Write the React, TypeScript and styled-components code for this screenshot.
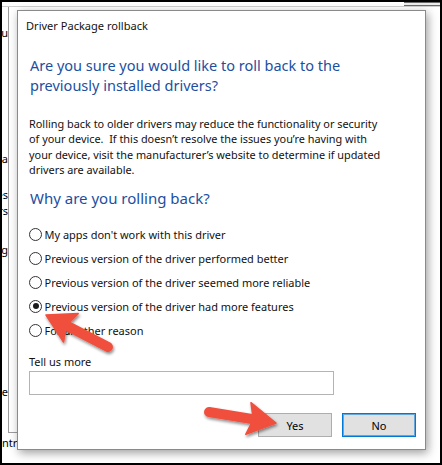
import React from "react";
import styled, { createGlobalStyle } from "styled-components";

const GlobalStyle = createGlobalStyle`
  html, body { margin: 0; padding: 0; background: #fff; }
  body { font-family: "Noto Sans", "Open Sans", sans-serif; color: #000; }
`;

const Frame = styled.div`
  position: relative;
  width: 442px;
  height: 465px;
  box-sizing: border-box;
  border: 2px solid #000;
  background: #fff;
  overflow: hidden;
`;

/* ---- window behind the dialog ---- */
const Backdrop = styled.div`
  display: flex;
  flex-direction: column;
  height: 100%;
`;

const TopEdge = styled.div`
  display: flex;
  justify-content: flex-end;
  height: 4px;
  flex-shrink: 0;
  border-bottom: 1px solid #cfcfcf;
`;

const TopEdgeDark = styled.div`
  width: 36px;
  border-top: 1px solid #6a6a6a;
  border-bottom: 1px solid #6a6a6a;
  background: #ececec;
`;

const Middle = styled.div`
  display: flex;
  height: 426px;
  flex-shrink: 0;
`;

const FragColumn = styled.div`
  width: 6px;
  display: flex;
  flex-direction: column;
  align-items: flex-end;
`;

const Frag = styled.div<{ $gap: number }>`
  margin-top: ${(p) => p.$gap}px;
  height: 12px;
  line-height: 12px;
  font-size: 11px;
  white-space: nowrap;
`;

const PaneEdge = styled.div`
  width: 10px;
  border-left: 1px solid #9c9c9c;
  border-bottom: 1px solid #9c9c9c;
`;

const BottomLabel = styled.div`
  margin-top: 4px;
  font-size: 11px;
  line-height: 12px;
  white-space: nowrap;
`;

/* ---- dialog ---- */
const Dialog = styled.div`
  position: absolute;
  left: 15px;
  top: 8px;
  width: 409px;
  height: 440px;
  box-sizing: border-box;
  border: 1px solid #8a8a8a;
  background: #fff;
  box-shadow: 2px 3px 9px rgba(0, 0, 0, 0.38);
  display: flex;
  flex-direction: column;
`;

const Title = styled.div`
  margin-top: 7px;
  padding-left: 8px;
  font-size: 11.05px;
  line-height: 16px;
  color: #111;
`;

const Body = styled.div`
  padding: 0 9px 0 11px;
  display: flex;
  flex-direction: column;
`;

const Heading = styled.div<{ $top: number; $size: number }>`
  margin-top: ${(p) => p.$top}px;
  margin-left: 1px;
  font-size: ${(p) => p.$size}px;
  line-height: 20px;
  color: #1c4f9f;
`;

const Para = styled.div`
  margin-top: 20.5px;
  font-size: 10.88px;
  line-height: 15.4px;
  color: #111;
`;

const RadioList = styled.div`
  margin-top: 14px;
  display: flex;
  flex-direction: column;
`;

const RadioRow = styled.label`
  display: flex;
  align-items: center;
  height: 24px;
  gap: 2.5px;
  font-size: 10.98px;
  color: #111;
`;

const RadioCircle = styled.span<{ $on?: boolean }>`
  width: 13px;
  height: 13px;
  box-sizing: border-box;
  border-radius: 50%;
  border: 1px solid #333;
  background: #fff;
  display: flex;
  align-items: center;
  justify-content: center;
  flex-shrink: 0;
  &::after {
    content: "";
    width: 6px;
    height: 6px;
    border-radius: 50%;
    background: ${(p) => (p.$on ? "#1a1a1a" : "transparent")};
  }
`;

const FieldLabel = styled.div`
  margin-top: 11.4px;
  font-size: 10.98px;
  line-height: 15px;
  color: #111;
`;

const TextBox = styled.div`
  margin-top: 2.6px;
  width: 305px;
  height: 24px;
  box-sizing: border-box;
  border: 1px solid #b4b4b4;
  background: #fff;
`;

const ButtonRow = styled.div`
  margin-top: 18px;
  display: flex;
  justify-content: flex-end;
  gap: 10px;
`;

const Button = styled.div<{ $primary?: boolean }>`
  width: 74px;
  height: 24px;
  box-sizing: border-box;
  display: flex;
  align-items: center;
  justify-content: center;
  font-size: 10.98px;
  color: #000;
  background: #e1e1e1;
  border: 1px solid ${(p) => (p.$primary ? "#0078d7" : "#adadad")};
  box-shadow: ${(p) => (p.$primary ? "inset 0 0 0 1px rgba(0,120,215,0.55)" : "none")};
`;

/* ---- callout arrows ---- */
const Overlay = styled.svg`
  position: absolute;
  left: -2px;
  top: -2px;
  width: 442px;
  height: 465px;
  pointer-events: none;
`;

type ArrowProps = { x1: number; y1: number; x2: number; y2: number };

function Arrow({ x1, y1, x2, y2 }: ArrowProps) {
  const len = Math.hypot(x2 - x1, y2 - y1);
  const dx = (x2 - x1) / len;
  const dy = (y2 - y1) / len;
  const px = -dy;
  const py = dx;
  const headLen = 28;
  const half = 16;
  const bx = x2 - dx * headLen;
  const by = y2 - dy * headLen;
  const nx = bx + dx * 5;
  const ny = by + dy * 5;
  const head = [
    `${x2},${y2}`,
    `${bx + px * half},${by + py * half}`,
    `${nx},${ny}`,
    `${bx - px * half},${by - py * half}`,
  ].join(" ");
  return (
    <g filter="url(#arrowShadow)">
      <line x1={x1} y1={y1} x2={nx} y2={ny} stroke="#f0503e" strokeWidth={10} strokeLinecap="round" />
      <polygon points={head} fill="#f0503e" strokeLinejoin="round" stroke="#f0503e" strokeWidth={1.5} />
    </g>
  );
}

const reasons = [
  "My apps don't work with this driver",
  "Previous version of the driver performed better",
  "Previous version of the driver seemed more reliable",
  "Previous version of the driver had more features",
  "For another reason",
];

export default function App() {
  return (
    <>
      <GlobalStyle />
      <Frame>
        <Backdrop>
          <TopEdge>
            <TopEdgeDark />
          </TopEdge>
          <Middle>
            <FragColumn>
              <Frag $gap={19.7}>u</Frag>
              <Frag $gap={114}>a</Frag>
              <Frag $gap={24}>es</Frag>
              <Frag $gap={4.5}>rs</Frag>
              <Frag $gap={27}>ng</Frag>
              <Frag $gap={130}>e</Frag>
            </FragColumn>
            <PaneEdge />
          </Middle>
          <BottomLabel>ntrol</BottomLabel>
        </Backdrop>

        <Dialog>
          <Title>Driver Package rollback</Title>
          <Body>
            <Heading $top={21.3} $size={14.5}>
              Are you sure you would like to roll back to the
              <br />
              previously installed drivers?
            </Heading>
            <Para>
              Rolling back to older drivers may reduce the functionality or security
              <br />
              of your device.&nbsp; If this doesn’t resolve the issues you’re having with
              <br />
              your device, visit the manufacturer’s website to determine if updated
              <br />
              drivers are available.
            </Para>
            <Heading $top={10.9} $size={15}>Why are you rolling back?</Heading>
            <RadioList>
              {reasons.map((r, i) => (
                <RadioRow key={r}>
                  <RadioCircle $on={i === 3} />
                  {r}
                </RadioRow>
              ))}
            </RadioList>
            <FieldLabel>Tell us more</FieldLabel>
            <TextBox />
            <ButtonRow>
              <Button>Yes</Button>
              <Button $primary>No</Button>
            </ButtonRow>
          </Body>
        </Dialog>

        <Overlay viewBox="0 0 442 465">
          <defs>
            <filter id="arrowShadow" x="-20%" y="-40%" width="140%" height="180%">
              <feDropShadow dx="1" dy="2" stdDeviation="1.4" floodColor="#000" floodOpacity="0.45" />
            </filter>
          </defs>
          <Arrow x1={108} y1={347} x2={46} y2={315} />
          <Arrow x1={209} y1={412} x2={276} y2={423} />
        </Overlay>
      </Frame>
    </>
  );
}
